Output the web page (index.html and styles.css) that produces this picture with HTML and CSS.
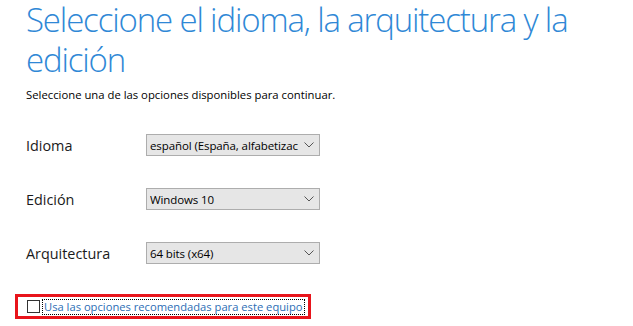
FILE: index.html
```html
<!DOCTYPE html>
<html lang="es">
<head>
<meta charset="utf-8">
<link rel="stylesheet" href="styles.css">
</head>
<body>
<main class="page">
  <h1 class="title">Seleccione el idioma, la arquitectura y la edición</h1>
  <p class="subtitle">Seleccione una de las opciones disponibles para continuar.</p>
  <div class="fields">
    <div class="field">
      <span class="label">Idioma</span>
      <div class="select"><span class="value">español (España, alfabetizac</span><svg class="chev" viewBox="0 0 10 6" width="10" height="6"><path d="M0.5 0.5 L5 5 L9.5 0.5" fill="none" stroke="#555" stroke-width="1"/></svg></div>
    </div>
    <div class="field">
      <span class="label">Edición</span>
      <div class="select"><span class="value">Windows 10</span><svg class="chev" viewBox="0 0 10 6" width="10" height="6"><path d="M0.5 0.5 L5 5 L9.5 0.5" fill="none" stroke="#555" stroke-width="1"/></svg></div>
    </div>
    <div class="field">
      <span class="label">Arquitectura</span>
      <div class="select"><span class="value">64 bits (x64)</span><svg class="chev" viewBox="0 0 10 6" width="10" height="6"><path d="M0.5 0.5 L5 5 L9.5 0.5" fill="none" stroke="#555" stroke-width="1"/></svg></div>
    </div>
  </div>
  <div class="highlight">
    <span class="checkbox"></span>
    <span class="check-label">Usa las opciones recomendadas para este equipo</span>
  </div>
</main>
</body>
</html>
```
FILE: styles.css
```css
html, body {
  margin: 0;
  padding: 0;
  background: #fff;
}
.page {
  width: 633px;
  height: 326px;
  overflow: hidden;
  padding: 0 0 0 26px;
  box-sizing: border-box;
  font-family: "Open Sans", "Noto Sans", sans-serif;
}
.title {
  margin: 0;
  width: 570px;
  font-weight: 300;
  font-size: 33px;
  letter-spacing: -1.15px;
  line-height: 40px;
  color: #2f88d6;
}
.subtitle {
  margin: 7px 0 0 0;
  font-size: 11.3px;
  line-height: 16px;
  color: #000;
}
.fields {
  display: flex;
  flex-direction: column;
  gap: 32px;
  margin-top: 31px;
}
.field {
  display: flex;
  align-items: center;
  height: 22px;
}
.label {
  width: 120px;
  font-size: 14.4px;
  color: #1a1a1a;
}
.select {
  width: 174px;
  height: 22px;
  box-sizing: border-box;
  border: 1px solid #adadad;
  background: #e6e6e6;
  display: flex;
  align-items: center;
  padding: 0 5px 0 3px;
  font-size: 11.5px;
  letter-spacing: -0.1px;
  color: #000;
}
.value {
  flex: 1;
  white-space: nowrap;
  overflow: hidden;
}
.chev {
  flex: none;
  margin-left: 4px;
}
.highlight {
  margin: 30px 0 0 -11px;
  width: 296px;
  height: 25px;
  box-sizing: border-box;
  border: 3px solid #e8141b;
  display: flex;
  align-items: center;
  padding-left: 9px;
}
.checkbox {
  width: 11px;
  height: 11px;
  border: 1px solid #333;
  background: #fff;
  flex: none;
}
.check-label {
  margin-left: 2px;
  border: 1px dotted #000;
  padding: 0 1px;
  font-size: 11.2px;
  line-height: 14px;
  color: #2b6db5;
  white-space: nowrap;
}
```
